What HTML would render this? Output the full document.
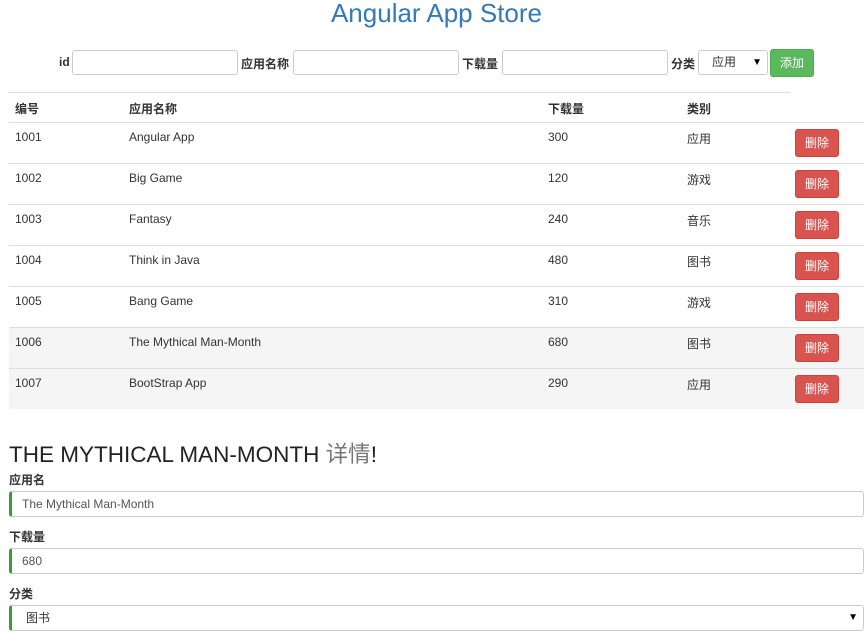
<!DOCTYPE html>
<html><head><meta charset="utf-8"><style>
*{box-sizing:border-box;margin:0;padding:0}
body{width:868px;height:632px;overflow:hidden;background:#fff;font-family:"Liberation Sans","Noto Sans CJK SC",sans-serif;color:#333;font-size:12px;position:relative}
.a{position:absolute}
h1{position:absolute;left:0;width:873px;text-align:center;top:-2px;font-size:26px;font-weight:normal;color:#337ab7}
.inp{position:absolute;height:25px;border:1px solid #ccc;border-radius:3px;background:#fff;top:50px}
.lbl{position:absolute;top:55px;font-weight:bold;font-size:12px}
.row{position:absolute;left:9px;width:855px;height:41px;border-top:1px solid #ddd}
.row span{position:absolute;top:7px}
.btn{position:absolute;left:786px;top:6px;width:44px;height:28px;background:#d9534f;border:1px solid #d43f3a;border-radius:3px;color:#fff;font-size:12px;text-align:center;line-height:26px}
.fld{position:absolute;left:9px;width:855px;height:26px;border:1px solid #ccc;border-left:3px solid #3c9a3c;border-radius:3px;padding-left:10px;line-height:24px;font-size:12px;color:#555}
.fl{position:absolute;left:9px;font-weight:bold;font-size:12px}
</style></head><body>
<h1>Angular App Store</h1>
<div class="lbl" style="left:59px">id</div>
<div class="inp" style="left:72px;width:166px"></div>
<div class="lbl" style="left:241px">应用名称</div>
<div class="inp" style="left:293px;width:166px"></div>
<div class="lbl" style="left:462px">下载量</div>
<div class="inp" style="left:502px;width:166px"></div>
<div class="lbl" style="left:671px">分类</div>
<div class="inp" style="left:698px;width:70px;padding-left:13px;line-height:23px">应用<span style="position:absolute;right:5px;font-size:10px;color:#000">▼</span></div>
<div class="a" style="left:770px;top:49px;width:44px;height:28px;background:#5cb85c;border:1px solid #4cae4c;border-radius:3px;color:#fff;text-align:center;line-height:26px;font-size:12px">添加</div>
<div class="a" style="left:9px;top:92px;width:781px;border-top:1px solid #ddd"></div>
<div class="a" style="left:15px;top:100px;font-weight:bold">编号</div>
<div class="a" style="left:129px;top:100px;font-weight:bold">应用名称</div>
<div class="a" style="left:548px;top:100px;font-weight:bold">下载量</div>
<div class="a" style="left:687px;top:100px;font-weight:bold">类别</div>
<div class="row" style="top:122px"><span style="left:6px">1001</span><span style="left:120px">Angular App</span><span style="left:539px">300</span><span style="left:678px">应用</span><div class="btn">删除</div></div>
<div class="row" style="top:163px"><span style="left:6px">1002</span><span style="left:120px">Big Game</span><span style="left:539px">120</span><span style="left:678px">游戏</span><div class="btn">删除</div></div>
<div class="row" style="top:204px"><span style="left:6px">1003</span><span style="left:120px">Fantasy</span><span style="left:539px">240</span><span style="left:678px">音乐</span><div class="btn">删除</div></div>
<div class="row" style="top:245px"><span style="left:6px">1004</span><span style="left:120px">Think in Java</span><span style="left:539px">480</span><span style="left:678px">图书</span><div class="btn">删除</div></div>
<div class="row" style="top:286px"><span style="left:6px">1005</span><span style="left:120px">Bang Game</span><span style="left:539px">310</span><span style="left:678px">游戏</span><div class="btn">删除</div></div>
<div class="row" style="top:327px;background:#f5f5f5"><span style="left:6px">1006</span><span style="left:120px">The Mythical Man-Month</span><span style="left:539px">680</span><span style="left:678px">图书</span><div class="btn">删除</div></div>
<div class="row" style="top:368px;background:#f5f5f5"><span style="left:6px">1007</span><span style="left:120px">BootStrap App</span><span style="left:539px">290</span><span style="left:678px">应用</span><div class="btn">删除</div></div>
<div class="a" style="left:9px;top:437px;font-size:22.5px;color:#222">THE MYTHICAL MAN-MONTH <span style="color:#777">详情</span>!</div>
<div class="fl" style="top:471px">应用名</div>
<div class="fld" style="top:491px">The Mythical Man-Month</div>
<div class="fl" style="top:528px">下载量</div>
<div class="fld" style="top:548px">680</div>
<div class="fl" style="top:585px">分类</div>
<div class="fld" style="top:605px;padding-left:14px;color:#333">图书<span style="position:absolute;right:5px;font-size:10px;color:#000">▼</span></div>
</body></html>
